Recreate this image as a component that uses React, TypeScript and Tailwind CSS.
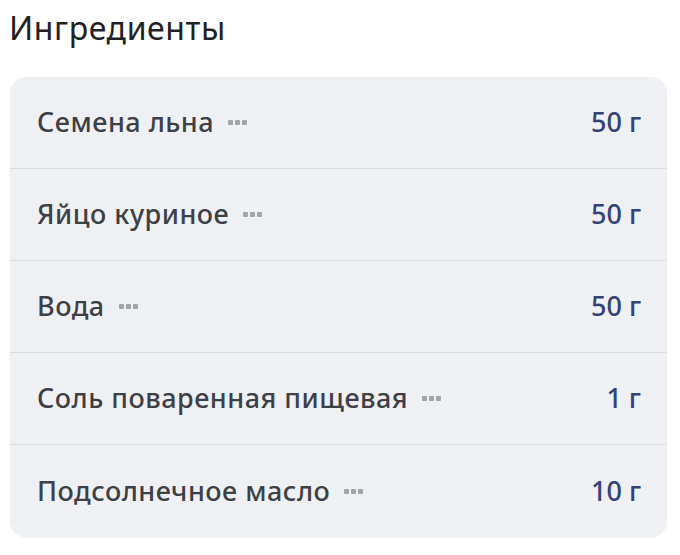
const ITEMS = [
  { name: 'Семена льна', amount: '50 г' },
  { name: 'Яйцо куриное', amount: '50 г' },
  { name: 'Вода', amount: '50 г' },
  { name: 'Соль поваренная пищевая', amount: '1 г' },
  { name: 'Подсолнечное масло', amount: '10 г' },
];

function Dots() {
  return (
    <span className="ml-[14px] flex items-center gap-[2px]">
      <span className="h-[5px] w-[5px] rounded-[1px] bg-[#a3a4a8]" />
      <span className="h-[5px] w-[5px] rounded-[1px] bg-[#a3a4a8]" />
      <span className="h-[5px] w-[5px] rounded-[1px] bg-[#a3a4a8]" />
    </span>
  );
}

export default function App() {
  return (
    <div className="min-h-[555px] w-[680px] bg-white font-['Noto_Sans',sans-serif]">
      <h1 className="pl-[9px] pt-[6px] text-[32px] leading-[44px] tracking-[0.6px] text-[#1f2124]">Ингредиенты</h1>
      <div className="mx-[10px] mt-[27px] w-[657px] rounded-[16px] bg-[#eff0f3] shadow-[0_1px_2px_rgba(0,0,0,0.04)]">
        {ITEMS.map((it, i) => (
          <div
            key={it.name}
            className={`flex h-[92px] items-center justify-between pl-[27px] pr-[26px] ${
              i < ITEMS.length - 1 ? 'border-b border-[#d9dade]' : ''
            }`}
          >
            <div className="flex items-center">
              <span className="text-[27px] font-medium tracking-[0.5px] text-[#3d4046]">{it.name}</span>
              <Dots />
            </div>
            <span className="text-[27px] font-medium text-[#34427a]">{it.amount}</span>
          </div>
        ))}
      </div>
    </div>
  );
}
